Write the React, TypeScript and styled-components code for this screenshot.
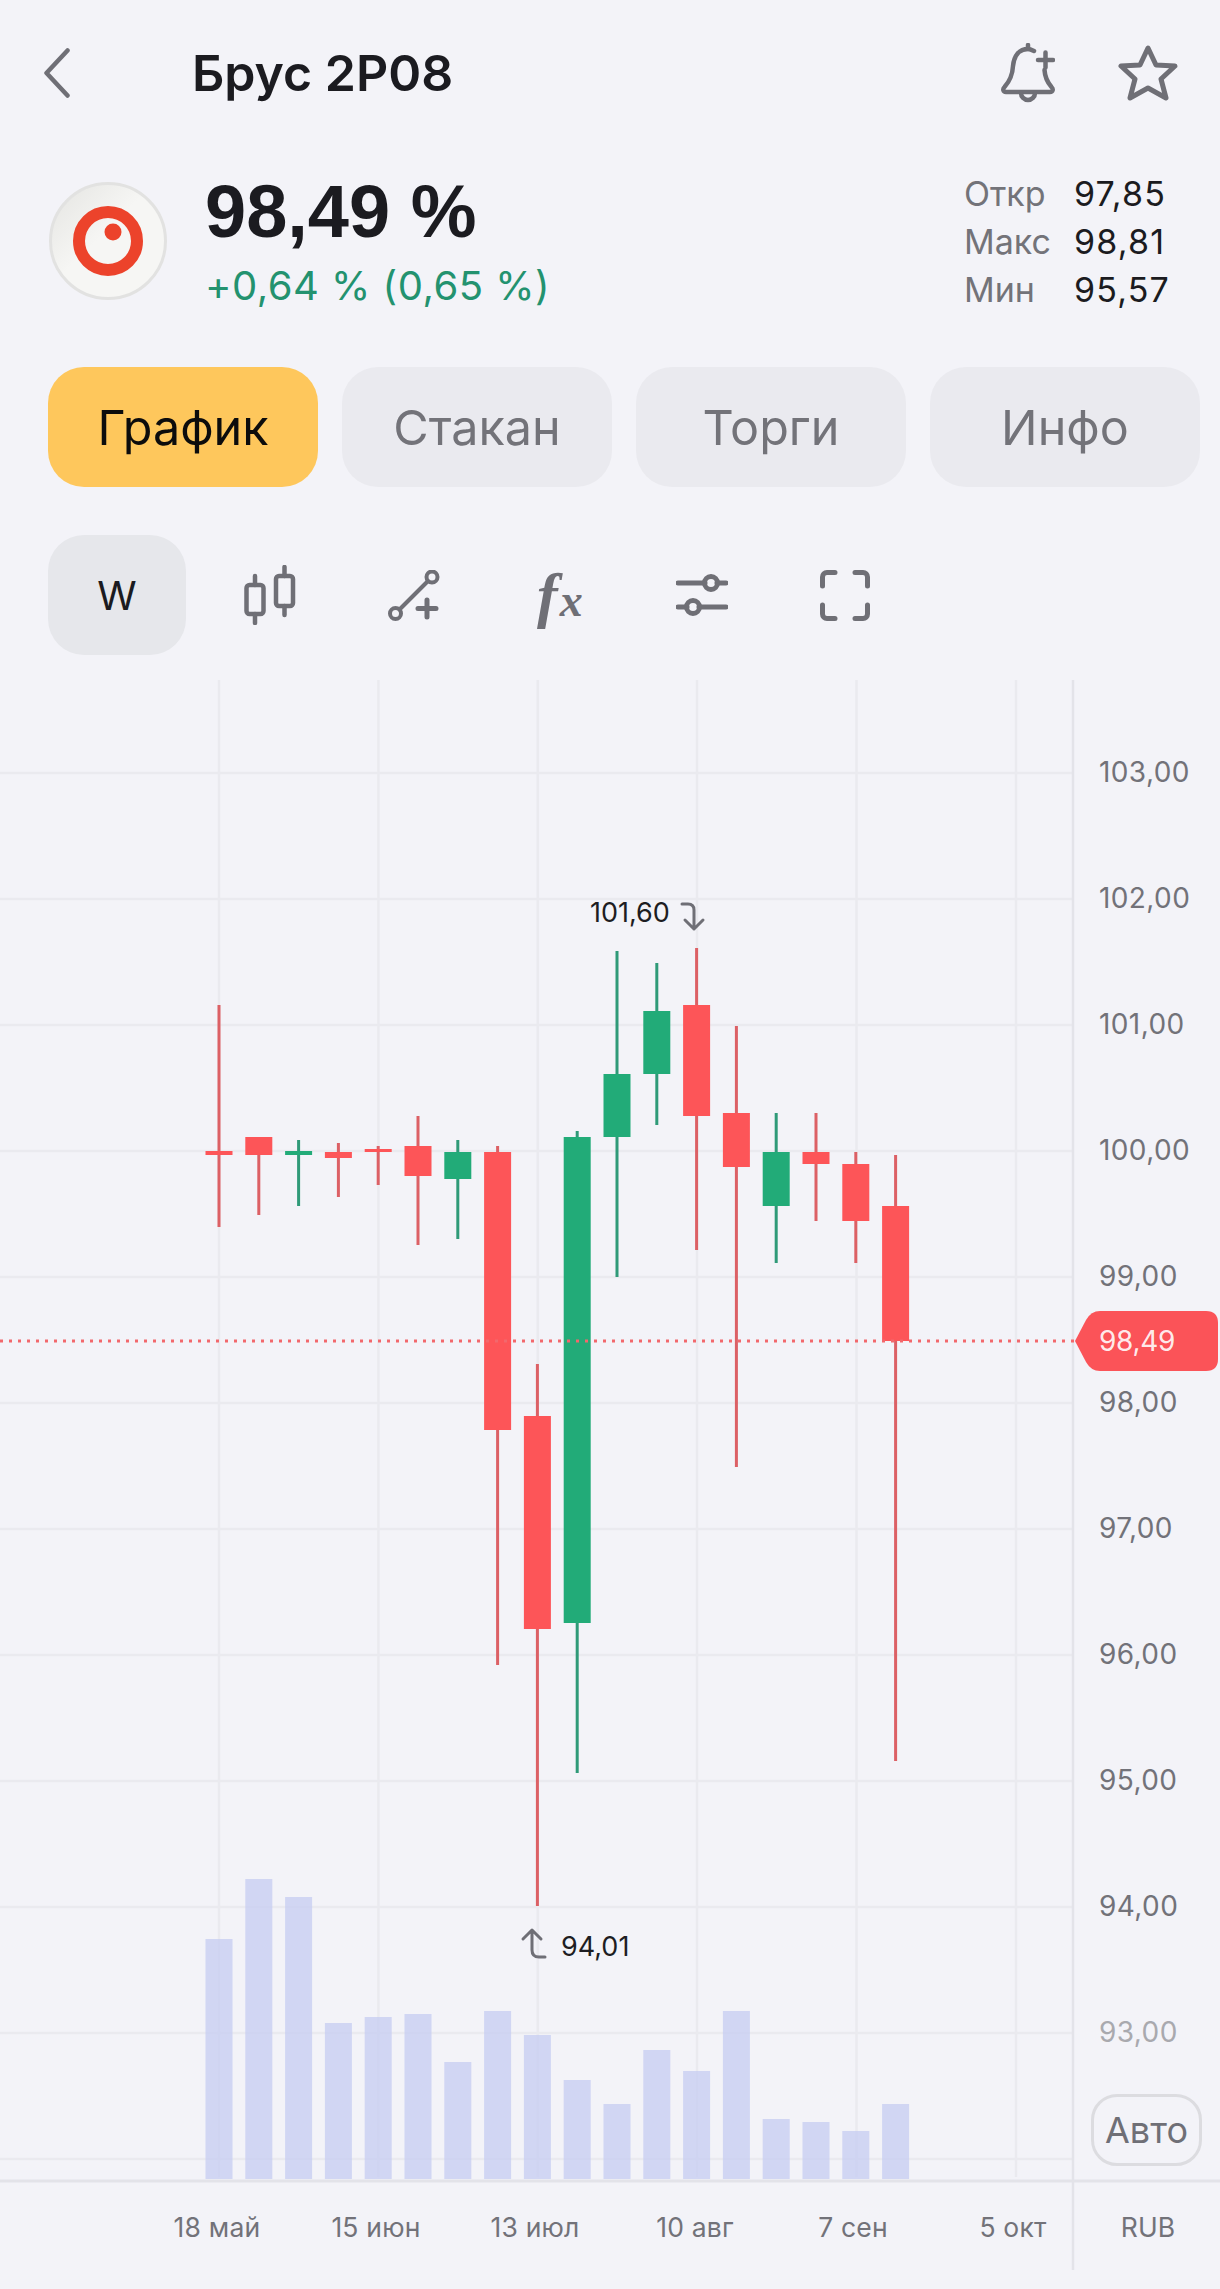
import styled, { createGlobalStyle } from 'styled-components';

const GlobalStyle = createGlobalStyle`
    html, body {
        margin: 0;
        padding: 0;
        background: #f3f3f8;
    }
`

const Page = styled.div`
    width: 1220px;
    height: 2289px;
    overflow: hidden;
    display: flex;
    flex-direction: column;
    background: #f3f3f8;
    font-family: Inter, "Liberation Sans", sans-serif;
    color: #1b1b20;
`

const Header = styled.header`
    height: 146px;
    padding: 0 42px 0 44px;
    box-sizing: border-box;
    display: flex;
    align-items: center;
`

const Title = styled.h1`
    margin: 0 0 0 122px;
    font-size: 50px;
    font-weight: 600;
    line-height: 1;
`

const HeaderIcons = styled.div`
    margin-left: auto;
    display: flex;
    align-items: center;
    gap: 63px;
`

const Summary = styled.section`
    height: 221px;
    padding: 0 50px 0 49px;
    box-sizing: border-box;
    display: flex;
    align-items: flex-start;
`

const LogoBox = styled.div`
    width: 118px;
    height: 118px;
    margin-top: 36px;
`

const PriceBlock = styled.div`
    margin-left: 38px;
    padding-top: 24px;
`

const Price = styled.div`
    font-family: "Liberation Sans", Arial, sans-serif;
    font-size: 74px;
    font-weight: 700;
    line-height: 84px;
`

const Change = styled.div`
    margin-top: 7px;
    font-size: 40px;
    line-height: 50px;
    color: #23926f;
    letter-spacing: 0.5px;
`

const Stats = styled.div`
    margin-left: auto;
    padding-top: 24px;
    display: grid;
    grid-template-columns: 110px auto;
    font-size: 34px;
    line-height: 48px;
`

const StatLabel = styled.span`
    color: #737379;
`

const StatValue = styled.span`
    letter-spacing: 1.2px;
`

const Tabs = styled.nav`
    padding: 0 20px 0 48px;
    display: grid;
    grid-template-columns: repeat(4, 270px);
    gap: 24px;
`

const Tab = styled.div<{ $active?: boolean }>`
    height: 120px;
    border-radius: 36px;
    display: flex;
    align-items: center;
    justify-content: center;
    font-size: 48.5px;
    background: ${p => (p.$active ? '#fec75c' : '#eaeaef')};
    color: ${p => (p.$active ? '#0c0c0c' : '#737379')};
`

const Toolbar = styled.div`
    margin-top: 48px;
    height: 120px;
    padding-left: 48px;
    display: flex;
    align-items: center;
`

const PeriodButton = styled.div`
    width: 138px;
    height: 120px;
    border-radius: 36px;
    background: #e6e7eb;
    display: flex;
    align-items: center;
    justify-content: center;
    font-size: 40px;
`

const ToolSlot = styled.div<{ $left: number }>`
    margin-left: ${p => p.$left}px;
    display: flex;
    align-items: center;
`

const Fx = styled.span`
    width: 46px;
    font-family: "Liberation Serif", serif;
    font-style: italic;
    font-weight: 700;
    color: #6f6f76;
    line-height: 1;
    white-space: nowrap;
    b {
        font-size: 62px;
    }
    i {
        font-size: 46px;
        margin-left: 2px;
    }
`

const ChartBox = styled.div`
    position: relative;
    margin-top: 25px;
    height: 1609px;
`

const ChartSvg = styled.svg`
    display: block;
    width: 1220px;
    height: 1609px;
`

const AxisText = styled.text<{ $muted?: boolean }>`
    font-size: 28px;
    letter-spacing: 0.4px;
    fill: ${p => (p.$muted ? '#a9a9ae' : '#727279')};
`

const TimeText = styled.text`
    font-size: 26.5px;
    letter-spacing: 0.2px;
    fill: #727279;
`

const NoteText = styled.text`
    font-size: 27px;
    fill: #1d1d22;
`

const PriceTagText = styled.text`
    font-size: 28px;
    letter-spacing: -0.3px;
    fill: #fff;
    fill-opacity: 0.9;
`

const AutoButton = styled.div`
    position: absolute;
    left: 1091px;
    top: 1414px;
    width: 111px;
    height: 72px;
    box-sizing: border-box;
    border: 3px solid #dcdce0;
    border-radius: 26px;
    display: flex;
    align-items: center;
    justify-content: center;
    font-size: 36px;
    color: #6f6f76;
`

const iconColor = '#6f6f76'
const red = '#fd5558'
const green = '#22ab78'

// wick top, wick bottom, body top, body bottom, rising
const candles: [number, number, number, number, boolean][] = [
    [1005, 1227, 1151, 1155, false],
    [1137, 1215, 1137, 1155, false],
    [1140, 1206, 1151, 1155, true],
    [1143, 1197, 1152, 1158, false],
    [1146, 1185, 1149, 1152, false],
    [1116, 1245, 1146, 1176, false],
    [1140, 1239, 1152, 1179, true],
    [1146, 1665, 1152, 1430, false],
    [1364, 1906, 1416, 1629, false],
    [1131, 1773, 1137, 1623, true],
    [951, 1277, 1074, 1137, true],
    [963, 1125, 1011, 1074, true],
    [948, 1250, 1005, 1116, false],
    [1026, 1467, 1113, 1167, false],
    [1113, 1263, 1152, 1206, true],
    [1113, 1221, 1152, 1164, false],
    [1152, 1263, 1164, 1221, false],
    [1155, 1761, 1206, 1341, false],
]

const volumes = [1939, 1879, 1897, 2023, 2017, 2014, 2062, 2011, 2035, 2080, 2104, 2050, 2071, 2011, 2119, 2122, 2131, 2104]

const prices = [103, 102, 101, 100, 99, 98, 97, 96, 95, 94, 93]
const priceY = (p: number) => 1151 + (100 - p) * 126
const candleX = (i: number) => 219 + i * 39.8

const timeLabels: [string, number][] = [
    ['18 май', 217],
    ['15 июн', 376],
    ['13 июл', 535],
    ['10 авг', 695],
    ['7 сен', 853],
    ['5 окт', 1013],
    ['RUB', 1148],
]

const gridX = [219, 378.4, 537.8, 697, 856.5, 1016]

const BackIcon = () => (
    <svg width="26" height="50" viewBox="0 0 26 50" fill="none">
        <path d="M23.5 2.5 L2.5 25 L23.5 47.5" stroke={iconColor} strokeWidth="4.5" strokeLinecap="round" strokeLinejoin="round" />
    </svg>
)

const BellIcon = () => (
    <svg width="54" height="60" viewBox="0 0 54 60" fill="none" stroke={iconColor} strokeWidth="4.5" strokeLinecap="round" strokeLinejoin="round">
        <path d="M33 8 C30 6.5 28 6 27 6 C18 6 13 13 12 23 C11.5 33 8 39 3.5 44 C1.5 46 2 49 5 49 H49 C52 49 52.5 46 50.5 44 C47 40 44 35 43.5 27" />
        <path d="M27 2 V6" />
        <path d="M37 17 H52 M44.5 9.5 V24.5" />
        <path d="M20 50 a7 7 0 0 0 14 0" />
    </svg>
)

const StarIcon = () => (
    <svg width="60" height="58" viewBox="0 0 60 58" fill="none" stroke={iconColor} strokeWidth="5" strokeLinejoin="round">
        <path d="M30 4 L38 21 L57 22 L43 35 L48 54 L30 44 L12 54 L17 35 L3 22 L22 21 Z" />
    </svg>
)

const LogoIcon = () => (
    <svg width="118" height="118" viewBox="0 0 118 118">
        <defs>
            <linearGradient id="logoShade" x1="0" y1="0" x2="1" y2="1">
                <stop offset="0" stopColor="#e4e4e1" />
                <stop offset="0.45" stopColor="#f6f6f4" />
                <stop offset="1" stopColor="#f6f6f4" />
            </linearGradient>
        </defs>
        <circle cx="59" cy="59" r="57.5" fill="url(#logoShade)" stroke="#e2e2e1" strokeWidth="3" />
        <circle cx="59" cy="59" r="29" fill="none" stroke="#ec432b" strokeWidth="12" />
        <circle cx="64" cy="50" r="8.5" fill="#ec432b" />
    </svg>
)

const CandlesIcon = () => (
    <svg width="52" height="60" viewBox="0 0 52 60" fill="none" stroke={iconColor} strokeWidth="4.5" strokeLinecap="round" strokeLinejoin="round">
        <rect x="2.5" y="20" width="17" height="29" rx="3" />
        <path d="M11 11 V20 M11 49 V58" />
        <rect x="32" y="11" width="17" height="30" rx="3" />
        <path d="M40.5 2 V11 M40.5 41 V50" />
    </svg>
)

const DrawIcon = () => (
    <svg width="52" height="51" viewBox="0 0 52 51" fill="none" stroke={iconColor} strokeWidth="4" strokeLinecap="round">
        <circle cx="44" cy="7" r="5.5" />
        <circle cx="7.5" cy="43.5" r="5.5" />
        <path d="M40 11 L11.5 39.5" />
        <path d="M30 38.5 H48 M39 30 V47" strokeWidth="5" />
    </svg>
)

const SlidersIcon = () => (
    <svg width="52" height="42" viewBox="0 0 52 42" fill="none" stroke={iconColor} strokeWidth="5" strokeLinecap="round">
        <path d="M2 9 H29 M41 9 H50" />
        <circle cx="35" cy="9" r="6.5" />
        <path d="M2 33 H11 M23 33 H50" />
        <circle cx="17" cy="33" r="6.5" />
    </svg>
)

const ExpandIcon = () => (
    <svg width="50" height="51" viewBox="0 0 50 51" fill="none" stroke={iconColor} strokeWidth="5" strokeLinecap="round">
        <path d="M2.5 16 V7 a4.5 4.5 0 0 1 4.5 -4.5 H15" />
        <path d="M35 2.5 H43 a4.5 4.5 0 0 1 4.5 4.5 V16" />
        <path d="M47.5 35 V44 a4.5 4.5 0 0 1 -4.5 4.5 H35" />
        <path d="M15 48.5 H7 a4.5 4.5 0 0 1 -4.5 -4.5 V35" />
    </svg>
)

const Chart = () => (
    <ChartSvg viewBox="0 680 1220 1609">
        {gridX.map(x => (
            <line key={x} x1={x} x2={x} y1={680} y2={2177} stroke="#eaeaef" strokeWidth="2.5" />
        ))}
        {[...prices, 92].map(p => (
            <line key={p} x1={0} x2={1073} y1={priceY(p)} y2={priceY(p)} stroke="#eaeaef" strokeWidth="2.5" />
        ))}
        {volumes.map((top, i) => (
            <rect key={i} x={candleX(i) - 13.5} y={top} width="27" height={2179 - top} fill="#c6ccf2" fillOpacity="0.75" />
        ))}
        <line x1={1073} x2={1073} y1={680} y2={2270} stroke="#e3e3e9" strokeWidth="2.5" />
        <line x1={0} x2={1220} y1={2181} y2={2181} stroke="#e3e3e9" strokeWidth="3" />
        {candles.map(([wickTop, wickBottom, bodyTop, bodyBottom, up], i) => (
            <g key={i}>
                <rect x={candleX(i) - 1.5} y={wickTop} width="3" height={wickBottom - wickTop} fill={up ? '#2f9a78' : '#dc6065'} />
                <rect x={candleX(i) - 13.5} y={bodyTop} width="27" height={bodyBottom - bodyTop} fill={up ? green : red} />
            </g>
        ))}
        <line x1={0} x2={1075} y1={1341} y2={1341} stroke="#f2686c" strokeWidth="3" strokeDasharray="3 6" />
        <path d="M1075 1341 L1086 1320 Q1091 1311 1100 1311 H1206 Q1218 1311 1218 1323 V1359 Q1218 1371 1206 1371 H1100 Q1091 1371 1086 1362 Z" fill="#fb5358" />
        <PriceTagText x={1099} y={1351}>98,49</PriceTagText>
        {prices.map(p => (
            <AxisText key={p} x={1099} y={priceY(p) + 9} $muted={p === 93}>{`${p},00`}</AxisText>
        ))}
        {timeLabels.map(([label, x]) => (
            <TimeText key={label} x={x} y={2237} textAnchor="middle">{label}</TimeText>
        ))}
        <NoteText x={590} y={922}>101,60</NoteText>
        <path d="M682 904 H688 Q694 904 694 910 V929 M685 920 L694 929 L703 920" fill="none" stroke={iconColor} strokeWidth="3" strokeLinecap="round" strokeLinejoin="round" />
        <NoteText x={561} y={1956}>94,01</NoteText>
        <path d="M523 1939 L532 1930 L541 1939 M532 1930 V1950 Q532 1957 539 1957 H545" fill="none" stroke={iconColor} strokeWidth="3" strokeLinecap="round" strokeLinejoin="round" />
    </ChartSvg>
)

export default function App() {
    return (
        <Page>
            <GlobalStyle />
            <Header>
                <BackIcon />
                <Title>Брус 2P08</Title>
                <HeaderIcons>
                    <BellIcon />
                    <StarIcon />
                </HeaderIcons>
            </Header>
            <Summary>
                <LogoBox>
                    <LogoIcon />
                </LogoBox>
                <PriceBlock>
                    <Price>98,49 %</Price>
                    <Change>+0,64 % (0,65 %)</Change>
                </PriceBlock>
                <Stats>
                    <StatLabel>Откр</StatLabel>
                    <StatValue>97,85</StatValue>
                    <StatLabel>Макс</StatLabel>
                    <StatValue>98,81</StatValue>
                    <StatLabel>Мин</StatLabel>
                    <StatValue>95,57</StatValue>
                </Stats>
            </Summary>
            <Tabs>
                <Tab $active>График</Tab>
                <Tab>Стакан</Tab>
                <Tab>Торги</Tab>
                <Tab>Инфо</Tab>
            </Tabs>
            <Toolbar>
                <PeriodButton>W</PeriodButton>
                <ToolSlot $left={58}><CandlesIcon /></ToolSlot>
                <ToolSlot $left={92}><DrawIcon /></ToolSlot>
                <ToolSlot $left={97}><Fx><b>f</b><i>x</i></Fx></ToolSlot>
                <ToolSlot $left={93}><SlidersIcon /></ToolSlot>
                <ToolSlot $left={92}><ExpandIcon /></ToolSlot>
            </Toolbar>
            <ChartBox>
                <Chart />
                <AutoButton>Авто</AutoButton>
            </ChartBox>
        </Page>
    );
}
